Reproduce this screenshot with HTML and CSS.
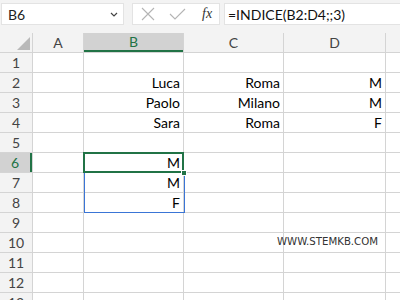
FILE: index.html
```html
<!DOCTYPE html>
<html lang="it">
<head>
  <meta charset="UTF-8" />
  <title>INDICE</title>
  <link rel="stylesheet" href="styles.css">
</head>
<body>
  <div class="toolbar">
    <div class="namebox">
      <span>B6</span>
      <svg class="chev" width="8" height="5" viewBox="0 0 8 5"><path d="M1 1l3 3 3-3" fill="none" stroke="#444" stroke-width="1.2"/></svg>
    </div>
    <div class="fbtns">
      <svg width="14" height="14" viewBox="0 0 14 14"><path d="M1 1l12 12M13 1L1 13" stroke="#b4b4b4" stroke-width="1.1"/></svg>
      <svg width="17" height="12" viewBox="0 0 17 12"><path d="M1 6l5 5L16 1" fill="none" stroke="#b4b4b4" stroke-width="1.1"/></svg>
      <span class="fx">fx</span>
    </div>
    <div class="formula">=INDICE(B2:D4;;3)</div>
  </div>

  <div class="sheet">
    <div class="grid">
      <div class="corner"><div class="tri"></div></div>
      <div class="ch">A</div><div class="ch sel">B</div><div class="ch">C</div><div class="ch">D</div><div class="ch"></div>

      <div class="rh">1</div><div class="c"></div><div class="c"></div><div class="c"></div><div class="c"></div><div class="c"></div>
      <div class="rh">2</div><div class="c"></div><div class="c">Luca</div><div class="c">Roma</div><div class="c">M</div><div class="c"></div>
      <div class="rh">3</div><div class="c"></div><div class="c">Paolo</div><div class="c">Milano</div><div class="c">M</div><div class="c"></div>
      <div class="rh">4</div><div class="c"></div><div class="c">Sara</div><div class="c">Roma</div><div class="c">F</div><div class="c"></div>
      <div class="rh">5</div><div class="c"></div><div class="c"></div><div class="c"></div><div class="c"></div><div class="c"></div>
      <div class="rh sel">6</div><div class="c"></div><div class="c active">M<span class="handle"></span></div><div class="c"></div><div class="c"></div><div class="c"></div>
      <div class="rh">7</div><div class="c"></div><div class="c">M</div><div class="c"></div><div class="c"></div><div class="c"></div>
      <div class="rh">8</div><div class="c"></div><div class="c">F</div><div class="c"></div><div class="c"></div><div class="c"></div>
      <div class="rh">9</div><div class="c"></div><div class="c"></div><div class="c"></div><div class="c"></div><div class="c"></div>
      <div class="rh">10</div><div class="c"></div><div class="c"></div><div class="c"></div><div class="c"></div><div class="c"></div>
      <div class="rh">11</div><div class="c"></div><div class="c"></div><div class="c"></div><div class="c"></div><div class="c"></div>
      <div class="rh">12</div><div class="c"></div><div class="c"></div><div class="c"></div><div class="c"></div><div class="c"></div>
      <div class="rh">13</div><div class="c"></div><div class="c"></div><div class="c"></div><div class="c"></div><div class="c"></div>
    </div>
    <div class="range"></div>
    <div class="watermark">WWW.STEMKB.COM</div>
  </div>
</body>
</html>
```
FILE: styles.css
```css
:root {
  --bar: #f3f3f3;
  --head: #f3f3f3;
  --head-sel: #d2d2d2;
  --line: #d4d4d4;
  --green: #217346;
  --blue: #3a75d6;
  --head-text: #444;
}
* { box-sizing: border-box; margin: 0; padding: 0; }
html, body { width: 400px; height: 300px; overflow: hidden; }
body {
  background: #fff;
  font-family: 'Lato', 'Open Sans', sans-serif;
  font-size: 14px;
  color: #000;
}
.toolbar {
  height: 33px;
  background: var(--bar);
  display: flex; gap: 8px;
  padding: 3px 0 0 1px;
}
.namebox, .fbtns, .formula {
  height: 22px;
  background: #fff;
  border: 1px solid #e3e3e3;
}
.namebox {
  width: 123px;
  display: flex; align-items: center; justify-content: space-between;
  padding: 0 5px 0 6px;
  color: #222;
}
.fbtns {
  width: 88px;
  display: flex; align-items: center;
  padding: 0 0 0 8px; gap: 14px;
}
.fx {
  font-family: 'Liberation Serif', serif;
  font-style: italic; font-size: 14px;
  color: #333; margin-left: 2px;
}
.formula {
  flex: 1;
  margin-left: -4px;
  border-right: none;
  padding: 1px 0 0 3px;
  line-height: 19px;
  color: #111;
}
.sheet { position: relative; }
.grid {
  display: grid;
  grid-template-columns: 32px 50px 99px 99px 101px 1fr;
  grid-auto-rows: 19px;
  gap: 1px;
  background: var(--line);
  padding-bottom: 1px;
}
.corner { background: var(--head); position: relative; }
.tri {
  position: absolute; right: 2px; bottom: 2px;
  width: 0; height: 0;
  border-left: 13px solid transparent;
  border-bottom: 13px solid #b9b9b9;
}
.ch {
  background: var(--head);
  text-align: center;
  line-height: 19px;
  color: var(--head-text);
}
.ch.sel {
  background: var(--head-sel);
  color: var(--green);
  border-bottom: 2px solid var(--green);
  line-height: 18px;
}
.rh {
  background: var(--head);
  text-align: center;
  line-height: 19px;
  color: var(--head-text);
}
.rh.sel {
  background: var(--head-sel);
  color: var(--green);
  border-right: 2px solid var(--green);
}
.c {
  background: #fff;
  text-align: right;
  line-height: 19px;
  padding-right: 3px;
  position: relative;
}
.c.active {
  outline: 2px solid var(--green);
  outline-offset: -1px;
  z-index: 2;
}
.handle {
  position: absolute; right: -4px; bottom: -4px;
  width: 6px; height: 6px;
  background: var(--green);
  border: 1px solid #fff;
}
.range {
  position: absolute;
  left: 84px; top: 139px;
  width: 101px; height: 41px;
  border: 1px solid var(--blue);
  border-top: none;
  z-index: 1;
}
.watermark {
  position: absolute;
  left: 277px; top: 203px;
  font-family: 'DejaVu Sans', sans-serif;
  font-size: 10.2px;
  color: #333;
}
```
